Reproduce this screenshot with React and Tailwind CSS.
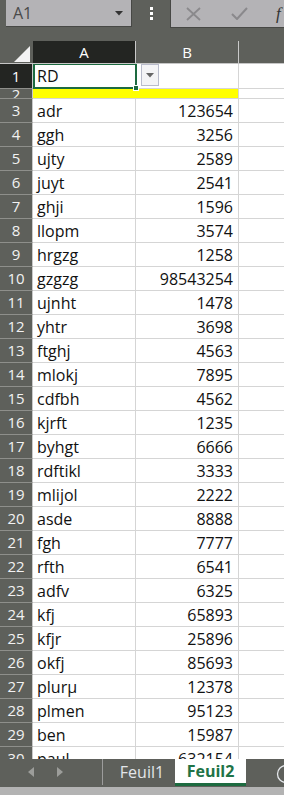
import React from "react";

const rows = [
  ["adr", "123654"], ["ggh", "3256"], ["ujty", "2589"], ["juyt", "2541"], ["ghji", "1596"],
  ["llopm", "3574"], ["hrgzg", "1258"], ["gzgzg", "98543254"], ["ujnht", "1478"], ["yhtr", "3698"],
  ["ftghj", "4563"], ["mlokj", "7895"], ["cdfbh", "4562"], ["kjrft", "1235"], ["byhgt", "6666"],
  ["rdftikl", "3333"], ["mlijol", "2222"], ["asde", "8888"], ["fgh", "7777"], ["rfth", "6541"],
  ["adfv", "6325"], ["kfj", "65893"], ["kfjr", "25896"], ["okfj", "85693"], ["plurµ", "12378"],
  ["plmen", "95123"], ["ben", "15987"], ["paul", "632154"],
];

function Row({ n, a, b }) {
  return (
    <div className="flex h-[24px] shrink-0">
      <div className="w-[33px] shrink-0 bg-[#5e605b] border-b border-b-[#8e8f8b] border-r border-r-[#c9c9c9] flex items-center justify-center text-[15px] text-[#f2f2f2]">
        {n}
      </div>
      <div className="w-[103px] shrink-0 border-b border-r border-[#d5d5d5] flex items-center pl-[4px] text-[16px] text-[#111] leading-none">
        {a}
      </div>
      <div className="w-[103px] shrink-0 border-b border-r border-[#d5d5d5] flex items-center justify-end pr-[5px] text-[16px] text-[#111] leading-none">
        {b}
      </div>
      <div className="flex-1 border-b border-[#d5d5d5]" />
    </div>
  );
}

export default function App() {
  return (
    <div className="w-[284px] h-[795px] overflow-hidden bg-[#5e605b] flex flex-col font-['Open_Sans',sans-serif]">
      {/* top bar */}
      <div className="h-[41px] shrink-0 flex items-start">
        <div className="ml-[6px] w-[126px] h-[27px] bg-[#b4b3b6] border-b border-r border-[#474845] flex items-center justify-between pl-[7px] pr-[8px]">
          <span className="text-[16px] text-[#4a4a4a] leading-none">A1</span>
          <svg width="8" height="5" viewBox="0 0 8 5"><path d="M0 0h8L4 4.5z" fill="#333" /></svg>
        </div>
        <div className="w-[38px] h-[27px] flex items-center justify-center">
          <div className="flex flex-col gap-[2px]">
            <div className="w-[3px] h-[3px] bg-white" />
            <div className="w-[3px] h-[3px] bg-white" />
            <div className="w-[3px] h-[3px] bg-white" />
          </div>
        </div>
        <div className="flex-1 h-[28px] bg-[#b4b3b6] border-l border-b border-[#474845] flex items-center pl-[15px]">
          <svg width="15" height="14" viewBox="0 0 15 14"><path d="M1 1l13 12M14 1L1 13" stroke="#8a898c" strokeWidth="1.8" /></svg>
          <svg className="ml-[30px]" width="17" height="13" viewBox="0 0 17 13"><path d="M1 7l5 5L16 1" stroke="#8a898c" strokeWidth="2" fill="none" /></svg>
          <span className="ml-[28px] text-[17px] italic text-[#333] font-['Liberation_Serif',serif] leading-none">f</span>
        </div>
      </div>
      {/* column headers */}
      <div className="h-[23px] shrink-0 flex border-b border-[#c6c6c6]">
        <div className="w-[33px] shrink-0 relative border-r border-[#5e605b]">
          <svg className="absolute left-[14px] top-[5px]" width="16" height="16" viewBox="0 0 16 16"><path d="M16 0V16H0z" fill="#f3f3f3" /></svg>
        </div>
        <div className="w-[103px] shrink-0 bg-[#232522] border-r border-[#c9c9c9] flex items-center justify-center text-[15px] text-white">A</div>
        <div className="w-[103px] shrink-0 border-r border-[#c9c9c9] flex items-center justify-center text-[15px] text-white">B</div>
        <div className="flex-1" />
      </div>
      {/* grid */}
      <div className="h-[695px] shrink-0 overflow-hidden bg-white relative flex flex-col">
        <div className="flex h-[25px] shrink-0">
          <div className="w-[33px] shrink-0 bg-[#232522] border-b border-b-[#8e8f8b] border-r border-r-[#c9c9c9] flex items-center justify-center text-[15px] text-white">1</div>
          <div className="w-[103px] shrink-0 border-b border-r border-[#d5d5d5] flex items-center pl-[4px] text-[16px] text-[#111] leading-none">RD</div>
          <div className="w-[103px] shrink-0 border-b border-r border-[#d5d5d5]" />
          <div className="flex-1 border-b border-[#d5d5d5]" />
        </div>
        <div className="flex h-[10px] shrink-0">
          <div className="w-[33px] shrink-0 bg-[#5e605b] border-b border-b-[#8e8f8b] border-r border-r-[#c9c9c9] overflow-hidden flex justify-center text-[15px] text-[#f2f2f2] leading-none">
            <span className="-mt-[2px]">2</span>
          </div>
          <div className="w-[103px] shrink-0 bg-[#ffff00] border-b border-[#d5d5d5]" />
          <div className="w-[103px] shrink-0 bg-[#ffff00] border-b border-r border-[#d5d5d5]" />
          <div className="flex-1 border-b border-[#d5d5d5]" />
        </div>
        {rows.map((r, i) => (
          <Row key={i} n={i + 3} a={r[0]} b={r[1]} />
        ))}
        {/* selection */}
        <div className="absolute left-[33px] top-[-1px] w-[104px] h-[26px] border-2 border-[#1d6b40] pointer-events-none" />
        <div className="absolute left-[133px] top-[21px] w-[6px] h-[6px] bg-[#1d6b40] border border-white" />
        {/* filter button */}
        <div className="absolute left-[141px] top-0 w-[18px] h-[22px] bg-[#f4f4f6] border border-[#b9bccb] flex items-center justify-center">
          <svg width="8" height="5" viewBox="0 0 8 5"><path d="M0 0h8L4 4.5z" fill="#666" /></svg>
        </div>
      </div>
      {/* tab bar */}
      <div className="h-[28px] shrink-0 flex items-start bg-[#5e605b]">
        <div className="w-[103px] h-[26px] flex items-center border-r border-[#9c9c9c] mt-[0px]">
          <svg className="ml-[28px]" width="6" height="10" viewBox="0 0 6 10"><path d="M6 0v10L0 5z" fill="#9c9d9a" /></svg>
          <svg className="ml-[23px]" width="6" height="10" viewBox="0 0 6 10"><path d="M0 0v10l6-5z" fill="#9c9d9a" /></svg>
        </div>
        <div className="w-[72px] h-[26px] flex items-center justify-center text-[16px] text-[#e3e6ea] leading-none pl-[6px]">Feuil1</div>
        <div className="w-[71px] h-[27px] bg-white border-b-[3px] border-[#1d6b40] flex items-center justify-center text-[16px] font-bold text-[#217346] leading-none">Feuil2</div>
        <div className="flex-1 relative h-[26px]">
          <svg className="absolute left-[30px] top-[5px]" width="20" height="20" viewBox="0 0 20 20"><circle cx="10" cy="10" r="8.5" stroke="#e3e6ea" strokeWidth="1.3" fill="none" /></svg>
        </div>
      </div>
      <div className="flex-1 bg-[#b3b3b3]" />
    </div>
  );
}
